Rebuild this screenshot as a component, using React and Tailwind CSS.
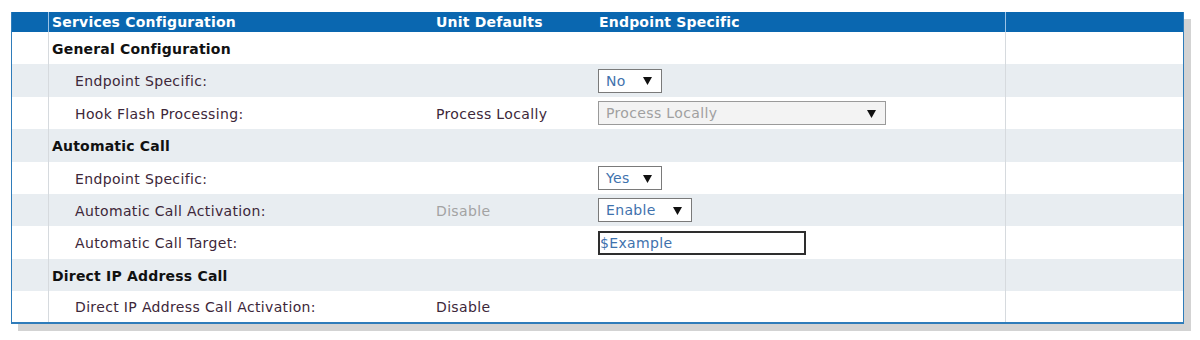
import React from "react";

const font = { fontFamily: '"DejaVu Sans", Verdana, sans-serif' };

function Arrow() {
  return (
    <svg width="9" height="10" viewBox="0 0 9 10" className="shrink-0">
      <path d="M0 1 H9 L4.5 9 Z" fill="#111" />
    </svg>
  );
}

function Select({ value, width, disabled }) {
  return (
    <div
      className={`flex h-[24px] items-center justify-between border pl-[7px] pr-[9px] pt-[1px] ${
        disabled
          ? "border-[#9a9a9a] bg-[#f3f3f3] text-[#a0a0a0]"
          : "border-[#7a7a7a] bg-white text-[#3f72ad]"
      }`}
      style={{ width }}
    >
      <span>{value}</span>
      <Arrow />
    </div>
  );
}

function Row({ h, gray, children, unit, unitGray, ctrl, heading }) {
  return (
    <div className={`flex ${gray ? "bg-[#e8edf1]" : "bg-white"}`} style={{ height: h }}>
      <div className="w-[37px] shrink-0 border-r border-[#d6dade]" />
      <div
        className={`flex w-[383px] shrink-0 items-center pt-[2px] ${
          heading ? "pl-[3px] font-bold tracking-[0.2px] text-[#111]" : "pl-[26px] text-[#3d2739]"
        }`}
      >
        {children}
      </div>
      <div
        className={`flex w-[164px] shrink-0 items-center pl-[4px] pt-[2px] ${
          unitGray ? "text-[#a3a3a3]" : "text-[#3d2739]"
        }`}
      >
        {unit}
      </div>
      <div className="flex w-[410px] shrink-0 items-center border-r border-[#d6dade] pl-[2px]">
        {ctrl}
      </div>
      <div className="flex-1" />
    </div>
  );
}

export default function App() {
  return (
    <div className="h-[340px] w-[1200px] bg-white pl-[11px] pt-[12px]" style={font}>
      <div className="w-[1173px] border-x border-b-2 border-[#2f7cba] text-[14px] tracking-[0.35px] shadow-[7px_7px_0_#d3d3d3]">
        <div className="flex h-[20px] bg-[#0a67b0] font-bold tracking-[0.2px] text-white">
          <div className="w-[37px] shrink-0 border-r border-[#9cc3e6]" />
          <div className="flex w-[383px] shrink-0 items-center pl-[3px] pt-[1px]">Services Configuration</div>
          <div className="flex w-[164px] shrink-0 items-center pl-[4px] pt-[1px]">Unit Defaults</div>
          <div className="flex w-[410px] shrink-0 items-center border-r border-[#9cc3e6] pl-[3px] pt-[1px]">
            Endpoint Specific
          </div>
          <div className="flex-1" />
        </div>
        <Row h={32} heading>General Configuration</Row>
        <Row h={33} gray ctrl={<Select value="No" width={64} />}>Endpoint Specific:</Row>
        <Row h={32} unit="Process Locally" ctrl={<Select value="Process Locally" width={288} disabled />}>
          Hook Flash Processing:
        </Row>
        <Row h={33} gray heading>Automatic Call</Row>
        <Row h={32} ctrl={<Select value="Yes" width={64} />}>Endpoint Specific:</Row>
        <Row h={32} gray unit="Disable" unitGray ctrl={<Select value="Enable" width={94} />}>
          Automatic Call Activation:
        </Row>
        <Row
          h={33}
          ctrl={
            <div className="flex h-[24px] w-[208px] items-center border-2 border-[#2e2e2e] bg-white pt-[1px] text-[#3f72ad]">
              $Example
            </div>
          }
        >
          Automatic Call Target:
        </Row>
        <Row h={32} gray heading>Direct IP Address Call</Row>
        <Row h={31} unit="Disable">Direct IP Address Call Activation:</Row>
      </div>
    </div>
  );
}
